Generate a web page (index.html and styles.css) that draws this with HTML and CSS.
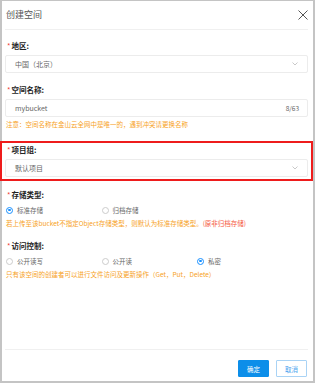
FILE: index.html
```html
<!DOCTYPE html>
<html lang="zh-CN">
<head>
  <meta charset="UTF-8">
  <title>创建空间</title>
  <link rel="stylesheet" href="styles.css">
</head>
<body>
  <div class="dialog">
    <div class="dialog-header">
      <span class="dialog-title">创建空间</span>
      <svg class="close" width="10" height="10" viewBox="0 0 10 10">
        <path d="M0.5 0.5L9.5 9.5M9.5 0.5L0.5 9.5" stroke="#555" stroke-width="1" fill="none"/>
      </svg>
    </div>
    <div class="dialog-body">
      <div class="form-item">
        <div class="label"><i>*</i>地区:</div>
        <div class="select">
          <span>中国（北京）</span>
          <svg class="chevron" width="6" height="4" viewBox="0 0 6 4"><path d="M0.5 0.5L3 3L5.5 0.5" stroke="#bbb" stroke-width="0.8" fill="none"/></svg>
        </div>
      </div>
      <div class="form-item">
        <div class="label"><i>*</i>空间名称:</div>
        <div class="select">
          <span>mybucket</span>
          <span class="count">8/63</span>
        </div>
        <div class="hint">注意：空间名称在金山云全网中是唯一的，遇到冲突请更换名称</div>
      </div>
      <div class="highlight">
        <div class="label"><i>*</i>项目组:</div>
        <div class="select">
          <span>默认项目</span>
          <svg class="chevron" width="6" height="4" viewBox="0 0 6 4"><path d="M0.5 0.5L3 3L5.5 0.5" stroke="#bbb" stroke-width="0.8" fill="none"/></svg>
        </div>
      </div>
      <div class="form-item">
        <div class="label"><i>*</i>存储类型:</div>
        <div class="radios">
          <label class="radio checked"><span class="dot"></span>标准存储</label>
          <label class="radio"><span class="dot"></span>归档存储</label>
        </div>
        <div class="hint">若上传至该bucket不指定Object存储类型，则默认为标准存储类型。<em>(原非归档存储)</em></div>
      </div>
      <div class="form-item">
        <div class="label"><i>*</i>访问控制:</div>
        <div class="radios">
          <label class="radio"><span class="dot"></span>公开读写</label>
          <label class="radio"><span class="dot"></span>公开读</label>
          <label class="radio checked"><span class="dot"></span>私密</label>
        </div>
        <div class="hint">只有该空间的创建者可以进行文件访问及更新操作（Get，Put，Delete）</div>
      </div>
    </div>
    <div class="dialog-footer">
      <button class="btn btn-primary">确定</button>
      <button class="btn">取消</button>
    </div>
  </div>
</body>
</html>
```

FILE: styles.css
```css
* {
  margin: 0;
  padding: 0;
  box-sizing: border-box;
}
body {
  font-family: "Noto Sans CJK SC", "Noto Sans", sans-serif;
  background: #fff;
  color: #333;
}
.dialog {
  width: 315px;
  height: 383px;
  border: 1px solid #c4c4c4;
  border-width: 1px 2px 2px 2px;
  display: flex;
  flex-direction: column;
  padding: 0 5px 0 3px;
}
.dialog-header {
  height: 29px;
  border-bottom: 1px solid #f0f0f0;
  display: flex;
  align-items: center;
  justify-content: space-between;
  padding: 0 0 1px 1px;
}
.dialog-title {
  font-size: 9px;
  color: #555;
}
.dialog-body {
  flex: 1;
  padding-top: 10px;
}
.form-item {
  margin-bottom: 11px;
}
.label {
  font-size: 7.5px;
  font-weight: 700;
  color: #222;
  line-height: 12px;
  margin-bottom: 3px;
  padding-left: 2px;
}
.label i {
  font-style: normal;
  color: #f04134;
  margin-right: 1px;
  font-weight: 400;
}
.select {
  height: 18px;
  border: 1px solid #ececec;
  border-radius: 2px;
  display: flex;
  align-items: center;
  justify-content: space-between;
  padding: 0 8px 0 9px;
  font-size: 6.5px;
  color: #666;
}
.select span:first-child {
  font-size: 7px;
}
.chevron {
  margin-right: 1px;
}
.hint {
  font-size: 6.5px;
  color: #f7a21e;
  line-height: 11px;
  margin-top: 2px;
  padding-left: 1px;
  white-space: nowrap;
}
.hint em {
  font-style: normal;
  color: #f5573b;
}
.highlight {
  border: 2px solid #ee1c1c;
  margin: 0 -5px 8px -5px;
  padding: 1px 3px 2px 3px;
}
.radios {
  display: flex;
  height: 12px;
  align-items: center;
  padding-left: 1px;
}
.radio {
  width: 95.5px;
  display: flex;
  align-items: center;
  font-size: 6.5px;
  color: #666;
}
.dot {
  width: 7px;
  height: 7px;
  border: 1px solid #ccc;
  border-radius: 50%;
  margin-right: 4px;
  position: relative;
}
.radio.checked .dot {
  border-color: #1890ff;
}
.radio.checked .dot::after {
  content: "";
  position: absolute;
  left: 1.25px;
  top: 1.25px;
  width: 2.5px;
  height: 2.5px;
  border-radius: 50%;
  background: #1890ff;
}
.dialog-footer {
  border-top: 1px solid #f0f0f0;
  height: 32px;
  display: flex;
  justify-content: flex-end;
  align-items: flex-start;
  gap: 7px;
  padding: 10px 1px 0 0;
}
.btn {
  width: 31px;
  height: 17px;
  font-family: inherit;
  font-size: 6.5px;
  border: 1px solid #a9d3f5;
  background: #fff;
  color: #4aa3ee;
  border-radius: 1px;
}
.btn-primary {
  background: #0c8ee9;
  border-color: #0c8ee9;
  color: #fff;
}
```
